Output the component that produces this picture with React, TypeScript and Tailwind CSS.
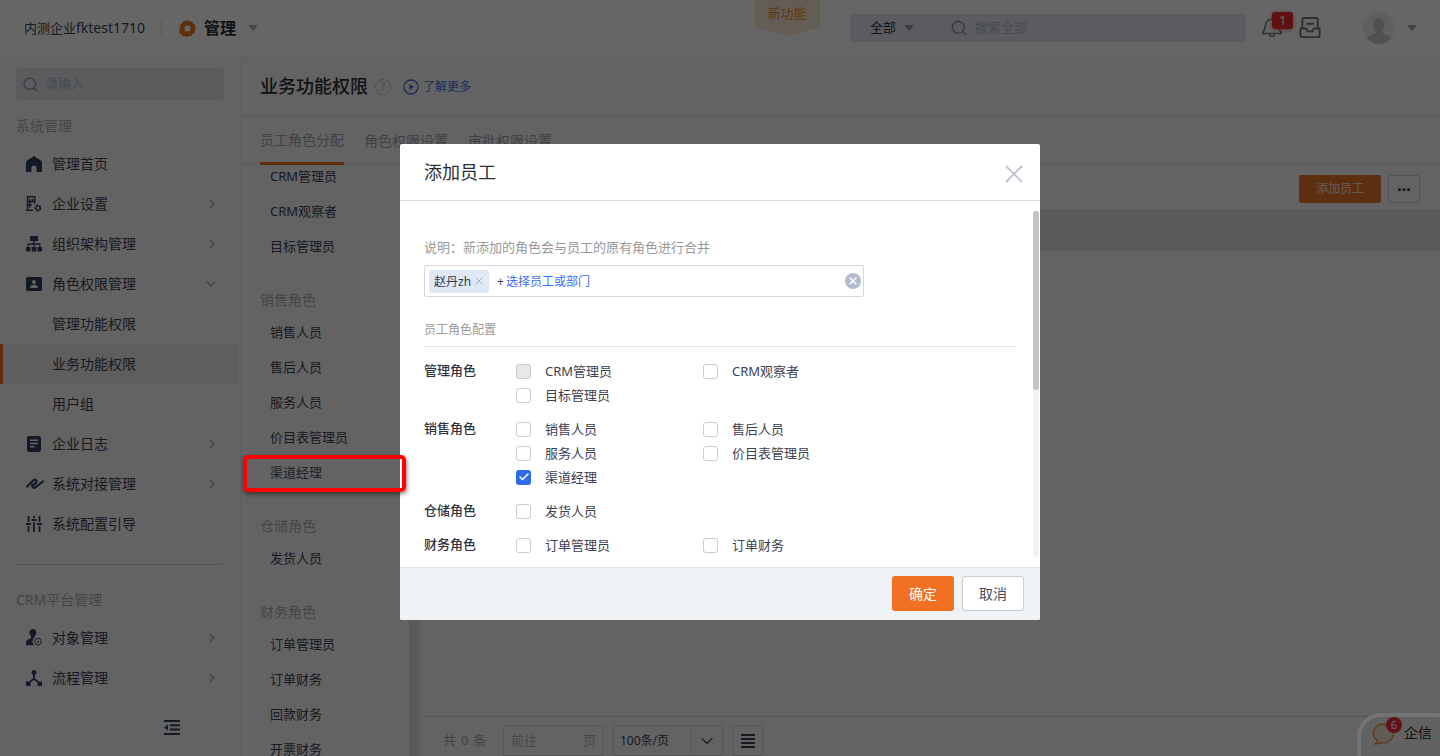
import { Check, ChevronDown, ChevronRight, Search, X } from "lucide-react"

const font = { fontFamily: '"Noto Sans", "Noto Sans CJK SC", sans-serif' }

const iconColor = "#33415c"

function HomeIcon() {
  return (
    <svg width="16" height="16" viewBox="0 0 16 16" fill={iconColor}>
      <path d="M8 0C6.500 1.500 4 2.500 2 3.800.7 4.600 0 5.800 0 7.300V16h5.500v-4a2.500 2.500 0 0 1 5 0v4H16V7.300c0-1.500-.7-2.700-2-3.500C12 2.500 9.500 1.500 8 0Z" />
    </svg>
  )
}

function CompanyIcon() {
  return (
    <svg width="16" height="16" viewBox="0 0 16 16" fill="none" stroke={iconColor}>
      <path d="M1.500 14V.8h7.200v7M0 14.200h7M3.700 3v9M6.400 3v3.500M1.500 5.400h7M1.500 9h4.500" strokeWidth="1.500" />
      <circle cx="12" cy="12" r="2.400" strokeWidth="2" strokeDasharray="2.200 .6" />
    </svg>
  )
}

function OrgIcon() {
  return (
    <svg width="16" height="16" viewBox="0 0 16 16" fill={iconColor}>
      <path d="M4 0h8v5H8.700v2.300H14.500V10.500h-1.400V8.700H8.700v1.800H7.300V8.700H2.900v1.800H1.500V7.300h5.800V5H4V0Z" />
      <path d="M0 11h4.500v4.500H1a1 1 0 0 1-1-1V11ZM5.750 11h4.500v4.500h-4.500zM11.500 11H16v3.500a1 1 0 0 1-1 1h-3.500V11Z" />
    </svg>
  )
}

function RoleIcon() {
  return (
    <svg width="16" height="16" viewBox="0 0 16 16" fill={iconColor}>
      <path fillRule="evenodd" d="M1.500 1h13A1.500 1.500 0 0 1 16 2.500v11a1.500 1.500 0 0 1-1.500 1.500h-13A1.500 1.500 0 0 1 0 13.500v-11A1.500 1.500 0 0 1 1.500 1ZM8 4a2 2 0 1 0 0 4 2 2 0 0 0 0-4ZM4 12h8c0-2-1.800-3.200-4-3.200S4 10 4 12Z" />
    </svg>
  )
}

function LogIcon() {
  return (
    <svg width="16" height="16" viewBox="0 0 16 16" fill={iconColor}>
      <path fillRule="evenodd" d="M3 0h10a2 2 0 0 1 2 2v12a2 2 0 0 1-2 2H3a2 2 0 0 1-2-2V2a2 2 0 0 1 2-2Zm1 3.500V5h8V3.500H4Zm0 3.200v1.500h8V6.700H4Zm0 3.200v1.500h4.500V9.900H4Z" />
    </svg>
  )
}

function LinkIcon() {
  return (
    <svg width="18" height="16" viewBox="0 0 18 16" fill="none" stroke={iconColor} strokeWidth="2.200" strokeLinecap="round" strokeLinejoin="round">
      <path d="M1.200 10.500 7.500 4.300c1.500-1.500 4 .2 2.700 2L8 9" />
      <path d="M6.500 8.500c-1 2 .8 4 2.800 3L16.800 5.500" />
    </svg>
  )
}

function SlidersIcon() {
  return (
    <svg width="16" height="16" viewBox="0 0 16 16" fill="none" stroke={iconColor} strokeWidth="1.800">
      <path d="M2.500 0v6M2.500 10v6M8 0v2M8 6v10M13.500 0v6M13.500 10v6" />
      <path d="M0 8h5M5.500 4h5M11 8h5" />
    </svg>
  )
}

function ObjectIcon() {
  return (
    <svg width="16" height="17" viewBox="0 0 16 17" fill={iconColor}>
      <path d="M7 0c2 0 3.400 1.500 3.400 3.500 0 1.400-.7 2.700-1.600 3.500v1.200A5 5 0 0 0 6.500 12.500c0 1.500.6 2.800 1.600 3.700H0v-2.500c0-2.500 3-3.700 5-4.700V7C4.100 6.200 3.500 4.900 3.500 3.500 3.500 1.500 5 0 7 0Z" />
      <circle cx="12" cy="12.700" r="3.300" fill="none" stroke={iconColor} strokeWidth="1" />
      <circle cx="12" cy="12.700" r="1" />
    </svg>
  )
}

function FlowIcon() {
  return (
    <svg width="16" height="16" viewBox="0 0 16 16" fill={iconColor}>
      <circle cx="8" cy="2.500" r="2.500" />
      <path d="M7 5h2v3.500l3.800 2.700-1 1.400L8 10l-3.800 2.600-1-1.400L7 8.500V5Z" />
      <path d="M0 11.500h4.500V16H0zM11.500 11.500H16V16h-4.500z" />
    </svg>
  )
}

function Caret({ className }: { className: string }) {
  return <span className={`inline-block h-0 w-0 border-x-[5px] border-t-[6px] border-x-transparent ${className}`} />
}

const navTop = [
  { label: "管理首页", icon: <HomeIcon />, arrow: "" },
  { label: "企业设置", icon: <CompanyIcon />, arrow: "right" },
  { label: "组织架构管理", icon: <OrgIcon />, arrow: "right" },
  { label: "角色权限管理", icon: <RoleIcon />, arrow: "down" },
  { label: "管理功能权限", icon: null, arrow: "" },
  { label: "业务功能权限", icon: null, arrow: "", active: true },
  { label: "用户组", icon: null, arrow: "" },
  { label: "企业日志", icon: <LogIcon />, arrow: "right" },
  { label: "系统对接管理", icon: <LinkIcon />, arrow: "right" },
  { label: "系统配置引导", icon: <SlidersIcon />, arrow: "" },
]

const navBottom = [
  { label: "对象管理", icon: <ObjectIcon />, arrow: "right" },
  { label: "流程管理", icon: <FlowIcon />, arrow: "right" },
]

type NavItem = { label: string; icon: React.ReactNode; arrow: string; active?: boolean }

function NavRow({ item }: { item: NavItem }) {
  return (
    <div
      className={`flex h-10 items-center pb-px pr-[19px] text-[14px] text-[#3b4252] ${
        item.active ? "border-l-[3px] border-[#f27024] bg-[#ebebeb] pl-[23px]" : "pl-[26px]"
      }`}
    >
      <span className="flex w-[26px] shrink-0 items-center">{item.icon}</span>
      <span className="flex-1">{item.label}</span>
      {item.arrow === "right" && <ChevronRight size={14} strokeWidth={2} className="text-[#9aa1ad]" />}
      {item.arrow === "down" && <ChevronDown size={16} strokeWidth={2} className="text-[#9aa1ad]" />}
    </div>
  )
}

const subGroups = [
  { title: "", items: ["CRM管理员", "CRM观察者", "目标管理员"] },
  { title: "销售角色", items: ["销售人员", "售后人员", "服务人员", "价目表管理员", "渠道经理"] },
  { title: "仓储角色", items: ["发货人员"] },
  { title: "财务角色", items: ["订单管理员", "订单财务", "回款财务", "开票财务"] },
]

function Box({ state }: { state?: "disabled" | "checked" }) {
  if (state === "checked") {
    return (
      <span className="flex h-[15px] w-[15px] shrink-0 items-center justify-center rounded-[3px] bg-[#2f6be6]">
        <Check size={12} strokeWidth={3} className="text-white" />
      </span>
    )
  }
  return (
    <span
      className={`h-[15px] w-[15px] shrink-0 rounded-[3px] border border-[#c8ccd4] ${
        state === "disabled" ? "bg-[#e8e8e8]" : "bg-white"
      }`}
    />
  )
}

type Opt = { label: string; state?: "disabled" | "checked" }

const roleGroups: { title: string; options: Opt[] }[] = [
  {
    title: "管理角色",
    options: [{ label: "CRM管理员", state: "disabled" }, { label: "CRM观察者" }, { label: "目标管理员" }],
  },
  {
    title: "销售角色",
    options: [
      { label: "销售人员" },
      { label: "售后人员" },
      { label: "服务人员" },
      { label: "价目表管理员" },
      { label: "渠道经理", state: "checked" },
    ],
  },
  { title: "仓储角色", options: [{ label: "发货人员" }] },
  { title: "财务角色", options: [{ label: "订单管理员" }, { label: "订单财务" }] },
]

function AddEmployeeDialog() {
  return (
    <div className="absolute left-[400px] top-[144px] flex h-[476px] w-[640px] flex-col rounded-[2px] bg-white">
      <div className="flex h-[57px] shrink-0 items-center justify-between border-b border-[#d9dbe1] pl-6 pr-[11px]">
        <span className="text-[18px] text-[#2a2e36]">添加员工</span>
        <X size={30} strokeWidth={1.5} className="mt-[4px] text-[#bfc5d0]" />
      </div>
      <div className="relative h-[366px] shrink-0 overflow-hidden pl-6 pr-6 pt-[36px]">
        <div className="h-[20px] text-[13px] leading-[20px] text-[#999999]">说明：新添加的角色会与员工的原有角色进行合并</div>
        <div className="mt-[8px] flex h-[32px] w-[440px] items-center rounded-[2px] border border-[#d5d9df] pl-1 pr-[2px]">
          <span className="flex h-[23px] w-[60px] items-center justify-between rounded-[2px] bg-[#e0e8f8] pl-[5px] pr-[3px] pt-[2px] text-[12px] text-[#333a48]">
            赵丹zh
            <X size={14} strokeWidth={1.6} className="-mt-[3px] text-[#a9b1c0]" />
          </span>
          <span className="ml-2 flex-1 pt-[2px] text-[12px] text-[#3b6df0]">
            <span className="mr-[2px] text-[#3b4252]">+</span>选择员工或部门
          </span>
          <span className="flex h-4 w-4 items-center justify-center rounded-full bg-[#b4bccf]">
            <X size={12} strokeWidth={3} className="text-white" />
          </span>
        </div>
        <div className="mt-[23px] h-[27px] w-[592px] border-b border-[#e4e6ea] text-[12px] leading-[20px] text-[#999999]">员工角色配置</div>
        <div className="mt-[12px] flex w-[592px] flex-col gap-[10px]">
          {roleGroups.map((group) => (
            <div key={group.title} className="flex">
              <span className="h-6 w-[92px] shrink-0 text-[13px] font-medium leading-[23px] text-[#2f3441]">{group.title}</span>
              <div className="grid w-[374px] grid-cols-2">
                {group.options.map((opt) => (
                  <label key={opt.label} className="flex h-6 items-center text-[13px] text-[#3b4252]">
                    <Box state={opt.state} />
                    <span className="ml-[14px] pt-px">{opt.label}</span>
                  </label>
                ))}
              </div>
            </div>
          ))}
        </div>
        <div className="absolute right-[1px] top-[10px] h-[346px] w-[6px] rounded-[3px] bg-[#f3f3f3]">
          <div className="h-[179px] w-[6px] rounded-[3px] bg-[#c4c4c4]" />
        </div>
      </div>
      <div className="flex flex-1 items-center justify-end gap-2 rounded-b-[2px] border-t border-[#dde0e4] bg-[#f0f3f6] pb-[1px] pr-4">
        <span className="flex h-[35px] w-[62px] items-center justify-center rounded-[3px] bg-[#f27024] text-[14px] text-white">确定</span>
        <span className="flex h-[35px] w-[62px] items-center justify-center rounded-[3px] border border-[#c9cdd4] bg-white text-[14px] text-[#4a4f5a]">取消</span>
      </div>
    </div>
  )
}

export default function App() {
  return (
    <div className="relative h-[756px] w-[1440px] overflow-hidden bg-white" style={font}>
      <header className="flex h-[57px] items-center border-b border-[#ececec] bg-white">
        <span className="ml-6 text-[13px] text-[#3b4252]">
          内测企业<span className="text-[14px]">fktest1710</span>
        </span>
        <span className="ml-4 h-4 w-px bg-[#dddddd]" />
        <svg className="ml-[17px]" width="17" height="17" viewBox="0 0 17 17" fill="#e8751c">
          <path fillRule="evenodd" d="M8.500 0l2 1.500 2.500-.3 1 2.300 2.300 1-.3 2.500L17 8.500l-1.500 2 .3 2.500-2.300 1-1 2.300-2.500-.3-2 1.500-2-1.500-2.500.3-1-2.300-2.300-1 .3-2.500L0 8.500l1.500-2-.3-2.500 2.300-1 1-2.300 2.500.3L8.500 0Zm0 5.500a3 3 0 1 0 0 6 3 3 0 0 0 0-6Z" />
        </svg>
        <span className="ml-[8px] text-[16px] font-bold text-[#2a2e36]">管理</span>
        <Caret className="ml-3 border-t-[#aab0bb]" />
        <div className="ml-[496px] flex h-[36px] w-[66px] -translate-y-[10px] items-center justify-center bg-[#fbe9d6] pb-[8px] text-[13px] text-[#ef8a2f] [clip-path:polygon(0_0,100%_0,100%_76%,50%_100%,0_76%)]">
          新功能
        </div>
        <div className="ml-[30px] flex h-[28px] w-[396px] items-center rounded-[3px] bg-[#e1e6f0] pl-5 text-[13px]">
          <span className="text-[#2f3441]">全部</span>
          <Caret className="ml-2 border-t-[#8f97a6]" />
          <Search size={18} strokeWidth={2} className="ml-9 text-[#8f97a6]" />
          <span className="ml-[7px] text-[#b4b9c4]">搜索全部</span>
        </div>
        <div className="relative ml-[14px] h-6 w-[23px]">
          <svg width="24" height="24" viewBox="0 0 24 24" fill="none" stroke="#7a8190" strokeWidth="1.600" strokeLinejoin="round">
            <path d="M12 3a6.500 6.500 0 0 0-6.500 6.500c0 5-3 6.500-3 8h19c0-1.500-3-3-3-8A6.500 6.500 0 0 0 12 3ZM9.500 18a2.500 2.500 0 0 0 5 0" />
          </svg>
          <span className="absolute left-3 top-[-4px] flex h-[17px] w-[21px] items-center justify-center rounded-[3px] bg-[#f02b2b] text-[12px] text-white shadow-[0_1px_4px_rgba(240,43,43,0.6)]">1</span>
        </div>
        <svg className="ml-[15px]" width="24" height="24" viewBox="0 0 24 24" fill="none" stroke="#6f7684" strokeWidth="2" strokeLinejoin="round">
          <path d="M4 12V4a2 2 0 0 1 2-2h12a2 2 0 0 1 2 2v8M8 8h8M2 13h6l1.500 3h5L16 13h6v7a2 2 0 0 1-2 2H4a2 2 0 0 1-2-2v-7Z" transform="translate(.5 0) scale(.96)" />
        </svg>
        <div className="ml-[41px] flex h-[32px] w-[32px] items-end justify-center overflow-hidden rounded-full bg-[#f0f0f0]">
          <svg width="26" height="28" viewBox="0 0 26 28" fill="#c8c8c8">
            <path d="M13 2c4 0 5.800 3 5.800 6.500 0 2.500-1 5-2.500 6.500v2c2 1.500 9.700 3 9.700 8v3H0v-3c0-5 7.700-6.500 9.700-8v-2C8.200 13.500 7.200 11 7.200 8.500 7.200 5 9 2 13 2Z" />
          </svg>
        </div>
        <Caret className="ml-3 border-t-[#9aa0ab]" />
      </header>

      <div className="flex h-[699px]">
        <aside className="relative flex w-[241px] shrink-0 flex-col border-r border-[#ececec] bg-[#f7f7f7]">
          <div className="ml-4 mt-[11px] flex h-[32px] w-[208px] items-center rounded-[2px] bg-[#e3e6ec] pl-[6px] text-[13px] text-[#b4b9c4]">
            <Search size={17} strokeWidth={2} className="text-[#8f97a6]" />
            <span className="ml-[6px]">请输入</span>
          </div>
          <div className="ml-4 mt-4 h-5 text-[14px] leading-5 text-[#aaaeb6]">系统管理</div>
          <div className="mt-[8px] w-[238px]">
            {navTop.map((item) => (
              <NavRow key={item.label} item={item} />
            ))}
          </div>
          <div className="ml-4 mt-5 h-px w-[206px] bg-[#d4d4d4]" />
          <div className="ml-4 mt-[25px] h-5 text-[14px] leading-5 text-[#aaaeb6]">CRM平台管理</div>
          <div className="mt-[8px] w-[238px]">
            {navBottom.map((item) => (
              <NavRow key={item.label} item={item} />
            ))}
          </div>
          <svg className="ml-[164px] mt-[22px]" width="16" height="15" viewBox="0 0 16 15" fill={iconColor}>
            <path d="M0 0h16v2H0zM6 4.300h10v2H6zM6 8.500h10v2H6zM0 13h16v2H0zM4 4.500v6L0 7.500z" />
          </svg>
        </aside>

        <main className="flex min-w-0 flex-1 flex-col bg-[#f8f8f8]">
          <div className="flex h-[60px] shrink-0 items-center border-b border-[#e4e4e4] pl-[19px]">
            <span className="text-[18px] font-medium text-[#2a2e36]">业务功能权限</span>
            <span className="ml-[7px] flex h-4 w-4 items-center justify-center rounded-full border border-[#c4c8d0] text-[11px] text-[#b0b5bf]">?</span>
            <svg className="ml-[12px]" width="16" height="16" viewBox="0 0 16 16" fill="none" stroke="#3f74dc" strokeWidth="1.300">
              <circle cx="8" cy="8" r="7" />
              <path d="M6.300 5v6L11 8Z" fill="#3f74dc" stroke="none" />
            </svg>
            <span className="ml-[4px] text-[12px] text-[#3f74dc]">了解更多</span>
          </div>
          <div className="flex h-[48px] shrink-0 items-end gap-5 border-b border-[#e4e4e4] pl-[19px] text-[14px] text-[#9ea3ae]">
            <span className="-mb-px flex h-[48px] items-center border-b-[3px] border-[#f27024]">员工角色分配</span>
            <span className="flex h-[47px] items-center">角色权限设置</span>
            <span className="flex h-[47px] items-center">审批权限设置</span>
          </div>
          <div className="flex min-h-0 flex-1">
            <div className="relative w-[179px] shrink-0 overflow-hidden border-r border-[#ececec]">
              <div className="-mt-[6px] pr-[11px]">
                {subGroups.map((group) => (
                  <div key={group.title}>
                    {group.title && (
                      <div className="mt-[22px] flex h-[29px] items-center pb-[2px] pl-[19px] text-[14px] text-[#aaaeb6]">{group.title}</div>
                    )}
                    {group.items.map((name) => (
                      <div
                        key={name}
                        className={`flex h-[35px] items-center pl-[29px] text-[13px] text-[#3b4252] ${name === "渠道经理" ? "bg-[#eeeeee]" : ""}`}
                      >
                        {name}
                      </div>
                    ))}
                  </div>
                ))}
              </div>
              <div className="absolute right-0 top-0 h-full w-[10px] bg-[#e0e0e0]" />
            </div>
            <div className="flex min-w-0 flex-1 flex-col bg-[#f8f8f8]">
              <div className="flex h-[45px] shrink-0 items-center justify-end gap-[7px] pr-5 pt-[2px]">
                <span className="flex h-[28px] w-[82px] items-center justify-center rounded-[2px] bg-[#e8752c] text-[12px] text-[#fbe4d3]">添加员工</span>
                <span className="flex h-[28px] w-[32px] items-center justify-center rounded-[2px] border border-[#c9cdd4] text-[16px] font-bold leading-none text-[#2a2e36]">···</span>
              </div>
              <div className="h-[41px] shrink-0 border-y border-[#dfe2e6] bg-[#e2e4e8]" />
              <div className="flex-1" />
              <div className="flex h-[40px] shrink-0 items-end border-t border-[#d6d9e4] pl-[23px] text-[13px]">
                <span className="flex h-[31px] w-[60px] items-center text-[#9ea3ae] [word-spacing:1.5px]">共 0 条</span>
                <span className="flex h-[31px] w-[101px] items-center justify-between rounded-t-[2px] border border-[#d5d9df] px-[7px] text-[#b0b5bf]">
                  <span>前往</span>
                  <span>页</span>
                </span>
                <span className="ml-[9px] flex h-[31px] w-[110px] items-center rounded-t-[2px] border border-[#d5d9df] text-[12px] text-[#3b4252]">
                  <span className="flex-1 pl-[6px]">100条/页</span>
                  <span className="flex h-full w-[31px] items-center justify-center border-l border-[#d5d9df]">
                    <ChevronDown size={20} strokeWidth={1.500} className="text-[#4a5160]" />
                  </span>
                </span>
                <span className="ml-[9px] flex h-[31px] w-[31px] flex-col items-center justify-center gap-[2px] rounded-t-[2px] border border-[#d5d9df]">
                  <span className="h-[2px] w-[14px] bg-[#3b4252]" />
                  <span className="h-[2px] w-[14px] bg-[#3b4252]" />
                  <span className="h-[2px] w-[14px] bg-[#3b4252]" />
                  <span className="h-[2px] w-[14px] bg-[#3b4252]" />
                </span>
              </div>
            </div>
          </div>
        </main>
      </div>

      <div className="absolute bottom-[-20px] right-[-20px] flex h-[63px] w-[103px] items-start rounded-[24px] border-[4px] border-transparent bg-[#f4f4f4] pl-[10px] pt-[5px]">
        <div className="relative">
          <svg width="25" height="24" viewBox="0 0 24 24" fill="#f5e6d8" stroke="#f28a2e" strokeWidth="1.300">
            <path d="M12 2c5.500 0 10 3.800 10 9.200 0 5.400-4.500 9.800-10 9.800-1 0-2 0-3-.4-1.500.8-3.500 1.500-5 1.400 1-1 1.500-2.300 1.500-3.600C3 16.500 2 14 2 11.200 2 5.800 6.500 2 12 2Z" />
          </svg>
          <span className="absolute left-[15px] top-[-5px] flex h-4 w-4 items-center justify-center rounded-full bg-[#f22c3d] text-[11px] text-white">6</span>
        </div>
        <span className="ml-[8px] text-[14px] text-[#2a2e36]">企信</span>
      </div>

      <div className="absolute inset-0 bg-black/60" />
      <div className="absolute bottom-[-20px] right-[-20px] h-[63px] w-[103px] rounded-[24px] border-[4px] border-[#747474]" />
      <AddEmployeeDialog />
      <div className="absolute left-[243px] top-[455px] h-[37px] w-[163px] rounded-[5px] border-[4px] border-[#ff0000] bg-white/[0.03] shadow-[1px_2px_4px_rgba(0,0,0,0.5)]" />
    </div>
  )
}
